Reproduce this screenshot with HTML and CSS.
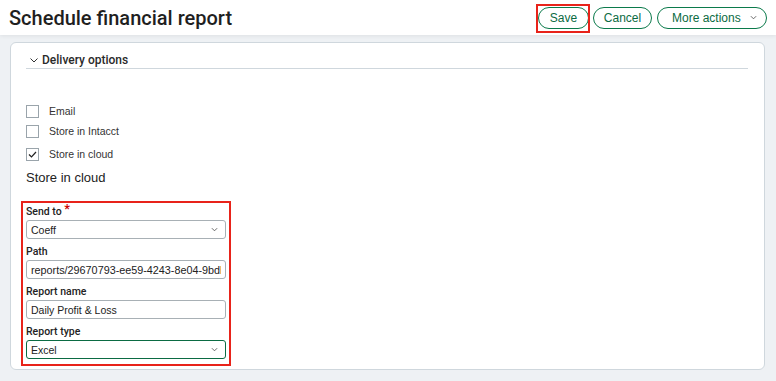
FILE: index.html
```html
<!DOCTYPE html>
<html>
<head>
<meta charset="utf-8">
<link rel="stylesheet" href="styles.css">
</head>
<body>
<header class="topbar">
  <h1 class="title">Schedule financial report</h1>
  <div class="actions">
    <button class="btn highlight">Save</button>
    <button class="btn btn-cancel">Cancel</button>
    <button class="btn btn-more">More actions <svg class="chev-sm" viewBox="0 0 8 5" width="7" height="5"><path d="M1 1l3 3 3-3" fill="none" stroke="#555" stroke-width="1"/></svg></button>
  </div>
</header>
<main class="content">
  <section class="card">
    <div class="section-head">
      <svg class="chev" viewBox="0 0 8 5" width="8" height="5"><path d="M0.5 0.5l3.5 3.5 3.5-3.5" fill="none" stroke="#333" stroke-width="1"/></svg>
      <span>Delivery options</span>
    </div>
    <div class="checks">
      <label class="check"><span class="box"></span>Email</label>
      <label class="check"><span class="box"></span>Store in Intacct</label>
      <label class="check checked"><span class="box"><svg viewBox="0 0 13 13" width="13" height="13"><path d="M3 6.5l2.5 2.5L10 4" fill="none" stroke="#222" stroke-width="1.2"/></svg></span>Store in cloud</label>
    </div>
    <h2 class="sub">Store in cloud</h2>
    <div class="form-box">
      <div class="field">
        <div class="label">Send to <span class="req">*</span></div>
        <div class="input select">Coeff<svg class="chev-sm" viewBox="0 0 8 5" width="7" height="5"><path d="M1 1l3 3 3-3" fill="none" stroke="#555" stroke-width="1"/></svg></div>
      </div>
      <div class="field">
        <div class="label">Path</div>
        <input class="input path" type="text" readonly value="reports/29670793-ee59-4243-8e04-9bdb1c3a0f21">
      </div>
      <div class="field">
        <div class="label">Report name</div>
        <div class="input">Daily Profit &amp; Loss</div>
      </div>
      <div class="field">
        <div class="label">Report type</div>
        <div class="input select focus">Excel<svg class="chev-sm" viewBox="0 0 8 5" width="7" height="5"><path d="M1 1l3 3 3-3" fill="none" stroke="#555" stroke-width="1"/></svg></div>
      </div>
    </div>
  </section>
</main>
</body>
</html>
```

FILE: styles.css
```css
* { box-sizing: border-box; }
html, body { margin: 0; padding: 0; }
body {
  background: #eef1f4;
  font-family: "Liberation Sans", Arial, sans-serif;
  color: #222;
  width: 776px;
  height: 381px;
  overflow: hidden;
}
.topbar {
  height: 35px;
  background: #fff;
  display: flex;
  align-items: center;
  justify-content: space-between;
  padding: 0 9px 0 9px;
  box-shadow: 0 1px 4px rgba(0,0,0,0.07);
  position: relative;
}
.title {
  margin: 0;
  font-family: Roboto, "Liberation Sans", sans-serif;
  font-size: 20px;
  font-weight: 500;
  color: #1f1f1f;
}
.actions {
  display: flex;
  align-items: center;
  gap: 4px;
}
.btn {
  height: 22px;
  border: 1px solid #0b7a4b;
  border-radius: 11px;
  background: #fff;
  color: #0b6b43;
  font-family: "Liberation Sans", Arial, sans-serif;
  font-size: 12px;
  padding: 0 11px;
  display: flex;
  align-items: center;
  position: relative;
}
.highlight { width: 51px; justify-content: center; padding: 0; }
.highlight::after {
  content: "";
  position: absolute;
  left: -3px;
  right: -2px;
  top: -4px;
  bottom: -5px;
  border: 2px solid #e8231a;
}
.btn-cancel { width: 59px; justify-content: center; padding: 0; }
.btn-more {
  width: 110px;
  padding: 0 9px 0 14px;
  justify-content: space-between;
  margin-left: 1px;
}
.content {
  padding: 7px 11px 11px 10px;
}
.card {
  background: #fff;
  border: 1px solid #cfd7dd;
  border-radius: 6px;
  height: 328px;
  padding: 8px 16px 0 15px;
}
.section-head {
  display: flex;
  align-items: center;
  gap: 4px;
  height: 17px;
  font-family: Roboto, "Liberation Sans", sans-serif;
  font-size: 12px;
  font-weight: 500;
  color: #2a2a2a;
  padding-left: 4px;
  border-bottom: 1px solid #cfd7dd;
  box-sizing: content-box;
}
.chev { margin-top: 1px; }
.checks {
  margin-top: 32px;
  display: flex;
  flex-direction: column;
}
.check {
  display: flex;
  align-items: center;
  gap: 10px;
  font-size: 10.5px;
  color: #333;
  height: 20px;
}
.check + .check.checked { margin-top: 3px; }
.box {
  width: 13px;
  height: 13px;
  border: 1px solid #9aa4ab;
  display: flex;
  align-items: center;
  justify-content: center;
  background: #fff;
}
.box svg { display: block; margin: -1px; }
.sub {
  margin: 6px 0 0 0;
  font-size: 13px;
  line-height: 15px;
  font-weight: 400;
  color: #222;
}
.form-box {
  margin-top: 16px;
  margin-left: -5px;
  width: 210px;
  border: 2px solid #e8231a;
  padding: 0 3px 5px 3px;
}
.field { display: flex; flex-direction: column; }
.field + .field { margin-top: 4px; }
.label {
  font-family: Roboto, "Liberation Sans", sans-serif;
  font-size: 10.5px;
  font-weight: 500;
  color: #222;
  height: 17px;
  line-height: 17px;
}
.req { color: #c00; font-size: 13px; vertical-align: top; line-height: 12px; }
.input {
  height: 19px;
  width: 100%;
  border: 1px solid #a8b0b5;
  border-radius: 3px;
  font-family: "Liberation Sans", Arial, sans-serif;
  font-size: 10.5px;
  color: #222;
  padding: 0 4px;
  margin: 0;
  display: flex;
  align-items: center;
  white-space: nowrap;
  overflow: hidden;
  background: #fff;
  outline: none;
}
.path { font-size: 10.8px; }
.select { justify-content: space-between; padding-right: 7px; }
.focus { border-color: #0b6b43; }
```
